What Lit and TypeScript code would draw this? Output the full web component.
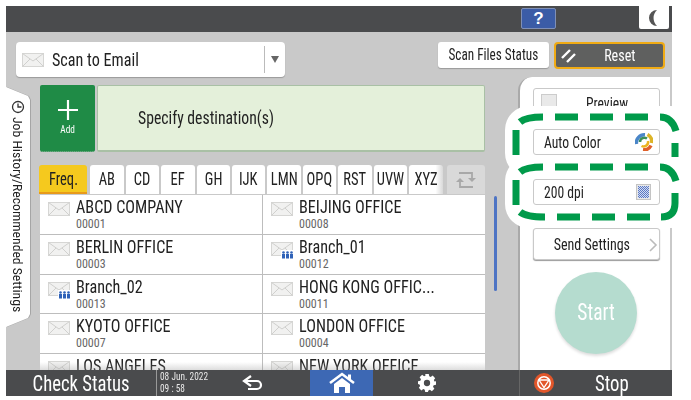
import { LitElement, html, css, svg } from "lit";
import { customElement } from "lit/decorators.js";

const envelope = (group = false) => html`<svg class="env" viewBox="0 0 24 20" width="24" height="20">
  <rect x="1.500" y="3.500" width="21" height="13" fill="#f1f1f0" stroke="#d6d6d4" stroke-width="1"/>
  <path d="M1.500 3.500 12 11 22.500 3.500M1.500 16.500 9 9M22.500 16.500 15 9" fill="none" stroke="#d0d0ce" stroke-width="1"/>
  ${group ? svg`<rect x="11" y="11" width="13" height="9" fill="#fff"/><g fill="#2f62b8"><circle cx="13.500" cy="13.500" r="1.300"/><circle cx="17.500" cy="13.500" r="1.300"/><circle cx="21.500" cy="13.500" r="1.300"/><rect x="12" y="15" width="3" height="4.500"/><rect x="16" y="15" width="3" height="4.500"/><rect x="20" y="15" width="3" height="4.500"/></g>` : ""}
</svg>`;

const rows: [string, string, boolean, string, string, boolean][] = [
  ["ABCD COMPANY", "00001", false, "BEIJING OFFICE", "00008", false],
  ["BERLIN OFFICE", "00003", false, "Branch_01", "00012", true],
  ["Branch_02", "00013", true, "HONG KONG OFFIC...", "00011", false],
  ["KYOTO OFFICE", "00007", false, "LONDON OFFICE", "00004", false],
  ["LOS ANGELES", "", false, "NEW YORK OFFICE", "", false],
];
const tabs = ["AB", "CD", "EF", "GH", "IJK", "LMN", "OPQ", "RST", "UVW", "XYZ"];

@customElement("app-root")
export class AppRoot extends LitElement {
  static styles = css`
    :host { display: block; width: 691px; height: 400px; background: #fff; overflow: hidden; position: relative;
      font-family: "Liberation Sans Narrow", "Roboto Condensed", "Liberation Sans", sans-serif; color: #222; }
    .s { display: inline-block; white-space: nowrap; transform: scaleX(var(--k, .85)); transform-origin: left center; }
    .c { transform-origin: center; }
    .screen { margin: 6px 0 0 6px; width: 666px; height: 390px; display: flex; flex-direction: column; background: #c9c9c9; }
    .top { height: 26px; flex: none; background: #4a4b4d; display: flex; align-items: flex-start; justify-content: flex-end; }
    .help { width: 35px; height: 21px; margin: 2px 83px 0 0; background: #3b5ca6; border: 1px solid #7f8fb5; border-radius: 2px; box-sizing: border-box;
      color: #fff; font: bold 17px/19px "Liberation Sans", sans-serif; text-align: center; }
    .moon { width: 30px; height: 23px; margin-right: 3px; background: #fff; border-radius: 0 0 2px 2px; display: flex; align-items: center; justify-content: center; }
    .head { height: 45px; flex: none; display: flex; align-items: flex-start; padding: 10px 7px 0 10px; box-sizing: border-box; }
    .drop { width: 269px; height: 35px; background: #fff; border-radius: 4px; box-shadow: 0 1px 1px #999; display: flex; align-items: center; padding-left: 5px; box-sizing: border-box; font-size: 19px; }
    .drop .env { margin-right: 7px; }
    .drop .lab { flex: 1; }
    .drop .arrow { width: 21px; height: 27px; border-left: 1px solid #bbb; display: flex; align-items: center; justify-content: center; box-sizing: border-box; }
    .arrow i { width: 0; height: 0; border: 4.5px solid transparent; border-top: 7px solid #666; border-bottom: 0; }
    .spacer { flex: 1; }
    .sfs { width: 111px; height: 26px; background: #fff; border-radius: 3px; box-shadow: 0 1px 1px #999; font-size: 16px; line-height: 26px; text-align: center; margin-right: 5px; --k: .825; }
    .reset { width: 111px; height: 27px; box-sizing: border-box; background: #5f605f; border: 2px solid #f0ab14; border-radius: 4px; color: #fff; font-size: 16px; display: flex; align-items: center; padding-left: 5px; --k: .88; }
    .reset .w { flex: 1; text-align: center; }
    .content { flex: 1; display: flex; min-height: 0; }
    .histwrap { width: 34px; flex: none; filter: drop-shadow(1px 0 0 #a5a5a5); padding-top: 10px; }
    .hist { width: 24px; height: 240px; background: #fff; box-sizing: border-box;
      clip-path: polygon(0 0, 22px 9px, 24px 13px, 24px 227px, 22px 231px, 0 240px);
      display: flex; flex-direction: column; align-items: center; padding-top: 13px; }
    .hist .txt { writing-mode: vertical-rl; font-size: 13.700px; line-height: 18px; white-space: nowrap; margin-top: 3px; }
    .mid { width: 445px; flex: none; display: flex; flex-direction: column; }
    .dest { display: flex; gap: 2px; margin-top: 8px; height: 67px; flex: none; }
    .add { width: 55px; background: #1f8b46; border-radius: 2px; color: #fff; display: flex; flex-direction: column; align-items: center; padding-top: 14px; box-sizing: border-box; font-size: 11px; line-height: 13px; border-bottom: 1px dotted #8fb79c; }
    .add svg { margin-bottom: 2px; }
    .spec { flex: 1; background: #e4f0da; border: 1px solid #a9c0a5; border-bottom-width: 2px; border-radius: 2px; box-sizing: border-box; font-size: 18.500px; display: flex; align-items: center; padding-left: 40px; }
    .tabs { margin-top: 13px; height: 30px; flex: none; display: flex; gap: 2px; position: relative; }
    .tab { height: 29px; width: 34px; background: #fff; border-radius: 3px 3px 0 0; font-size: 17.500px; line-height: 29px; text-align: center; box-sizing: border-box; --k: .83; }
    .tab.freq { width: 49px; background: #f5c91e; border-bottom: 2px solid #e89a1a; margin-right: 1px; margin-left: -1px; }
    .tab.last { background: linear-gradient(90deg, #fff 78%, #d9d9d9); }
    .tab.swap { width: 39px; background: #d9d9d9; margin-left: 2px; display: flex; align-items: center; justify-content: center; }
    .list { flex: 1; min-height: 0; overflow: hidden; background: #fff; position: relative; }
    .list::after { content: ""; position: absolute; left: 0; right: 0; bottom: 0; height: 8px; background: linear-gradient(#fff0, #9995); }
    .row { display: grid; grid-template-columns: 222px 1fr; height: 39.750px; border-bottom: 1px solid #bdbdbd; box-sizing: border-box; }
    .cell { display: flex; padding: 1px 0 0 7px; box-sizing: border-box; }
    .cell + .cell { border-left: 1px solid #bdbdbd; }
    .cell .env { margin: 3px 5px 0 0; flex: none; }
    .name { font-size: 19px; line-height: 22px; white-space: nowrap; }
    .num { font-size: 12px; line-height: 14px; margin-top: -1px; color: #666; }
    .scroll { width: 33px; flex: none; padding: 119px 0 0 9px; box-sizing: border-box; }
    .scroll i { display: block; width: 3px; height: 95px; background: #4e74c4; border-radius: 2px; }
    .panel { width: 152px; flex: none; background: #fff; border-left: 2px solid #a9a9a9; border-top-left-radius: 14px; box-sizing: border-box; display: flex; flex-direction: column; align-items: flex-start; padding: 11px 0 0 13px; }
    .opt { width: 127px; height: 26px; flex: none; background: #fff; border: 1px solid #c9c9c9; border-radius: 3px; box-sizing: border-box; font-size: 16px; display: flex; align-items: center; padding: 0 5px 0 10px; justify-content: space-between; position: relative; z-index: 1; }
    .prev { height: 30px; margin-bottom: 11px; padding-left: 7px; z-index: 0; position: static; align-items: flex-start; padding-top: 5px; }
    .prev i { width: 14px; height: 14px; background: #e9e9e9; border: 1px solid #ccc; }
    .prev span { width: 44px; margin-right: 24px; }
    .o2 { margin-bottom: 24px; padding-right: 6px; }
    .o2 .s, .o3 .s { width: 60px; }
    .o3 { margin-bottom: 23px; padding-right: 8px; }
    .send { height: 32px; box-shadow: 0 1px 1px #999; justify-content: center; font-size: 16.500px; padding: 0 10px 0 0; }
    .send svg { position: absolute; right: 1px; top: 8px; }
    .start { width: 82px; height: 82px; border-radius: 50%; background: #b5dccf; color: #fff; font-size: 23px; line-height: 82px; text-align: center; margin: 12px 0 0 22px; box-shadow: 0 2px 3px #ddd; }
    .bottom { height: 26px; flex: none; background: #4a4b4d; color: #fff; display: flex; align-items: center; }
    .chk { width: 150px; font-size: 22px; text-align: center; flex: none; }
    .date { width: 60px; height: 26px; flex: none; border-left: 1px solid #999; box-sizing: border-box; font-size: 11px; line-height: 12px; padding: 1px 0 0 3px; color: #e8e8e8; }
    .back { width: 94px; flex: none; display: flex; justify-content: center; padding-right: 20px; box-sizing: border-box; }
    .home { width: 63px; height: 26px; flex: none; background: #3d68b4; display: flex; align-items: center; justify-content: center; }
    .gear { width: 147px; flex: none; display: flex; justify-content: center; border-right: 1px solid #666; box-sizing: border-box; height: 26px; align-items: center; padding-right: 38px; }
    .stopi { margin-left: 14px; flex: none; }
    .stop { font-size: 22px; flex: 1; text-align: center; padding-right: 2px; }
    .ov { position: absolute; left: 0; top: 0; pointer-events: none; }
  `;

  render() {
    return html`<div class="screen">
      <div class="top">
        <div class="help">?</div>
        <div class="moon"><svg width="16" height="18" viewBox="0 0 16 18"><path d="M11 1A8 8 0 1 0 11 17 11 11 0 0 1 11 1Z" fill="#555"/></svg></div>
      </div>
      <div class="head">
        <div class="drop">${envelope()}<span class="lab"><span class="s">Scan to Email</span></span><span class="arrow"><i></i></span></div>
        <div class="spacer"></div>
        <div class="sfs"><span class="s c">Scan Files Status</span></div>
        <div class="reset"><svg width="16" height="14" viewBox="0 0 16 14"><path d="M1 9 9 1M6 13 14 5" stroke="#fff" stroke-width="2.400" fill="none"/></svg><span class="w"><span class="s c">Reset</span></span></div>
      </div>
      <div class="content">
        <div class="histwrap"><div class="hist">
          <svg width="14" height="14" viewBox="0 0 14 14"><circle cx="7" cy="7" r="5.500" fill="none" stroke="#333" stroke-width="1.300"/><path d="M3.500 7H7V3.500" transform="rotate(90 7 7)" fill="none" stroke="#333" stroke-width="1.300"/></svg>
          <span class="txt">Job History/Recommended Settings</span>
        </div></div>
        <div class="mid">
          <div class="dest">
            <div class="add"><svg width="22" height="22" viewBox="0 0 22 22"><path d="M11 1V21M1 11H21" stroke="#fff" stroke-width="2.200"/></svg><span class="s c">Add</span></div>
            <div class="spec"><span class="s">Specify destination(s)</span></div>
          </div>
          <div class="tabs">
            <div class="tab freq"><span class="s c">Freq.</span></div>
            ${tabs.map((t) => html`<div class="tab ${t === "XYZ" ? "last" : ""}"><span class="s c">${t}</span></div>`)}
            <div class="tab swap"><svg width="22" height="18" viewBox="0 0 22 18"><path d="M4 2H17V7M18 16H5V11" fill="none" stroke="#a8a8a8" stroke-width="1.800"/><path d="M13 7H21L17 11ZM1 11H9L5 7Z" fill="#a8a8a8"/></svg></div>
          </div>
          <div class="list">
            ${rows.map((r) => html`<div class="row">
              <div class="cell">${envelope(r[2])}<div><div class="name"><span class="s">${r[0]}</span></div><div class="num">${r[1]}</div></div></div>
              <div class="cell">${envelope(r[5])}<div><div class="name"><span class="s">${r[3]}</span></div><div class="num">${r[4]}</div></div></div>
            </div>`)}
          </div>
        </div>
        <div class="scroll"><i></i></div>
        <div class="panel">
          <div class="opt prev"><i></i><span class="s">Preview</span></div>
          <div class="opt o2"><span class="s">Auto Color</span>
            <svg width="18" height="18" viewBox="0 0 18 18" fill="none" stroke-width="3.500"><path d="M1.500 11A8 8 0 0 1 10 1.800" stroke="#4a86c8"/><path d="M12.500 1.500A8 8 0 0 1 16.500 10" stroke="#dcb428"/><path d="M16 12.500A8 8 0 0 1 8 16.800" stroke="#e0602a"/><path d="M5 9A4.500 4.500 0 0 1 12 5.500" stroke="#3e9058" stroke-width="2.500"/><path d="M13 8A4.500 4.500 0 0 1 6.500 13" stroke="#ecb420" stroke-width="2.500"/></svg>
          </div>
          <div class="opt o3"><span class="s">200 dpi</span>
            <svg width="15" height="16" viewBox="0 0 15 16"><defs><pattern id="h" width="2" height="2" patternUnits="userSpaceOnUse"><rect width="2" height="2" fill="#d3dcf1"/><rect width="1" height="1" fill="#5a78c4"/><rect x="1" y="1" width="1" height="1" fill="#5a78c4"/></pattern></defs><rect x=".5" y=".5" width="14" height="15" fill="#e8e8e8" stroke="#c4c4c4"/><rect x="2" y="2" width="11" height="12" fill="url(#h)"/></svg>
          </div>
          <div class="opt send"><span class="s c">Send Settings</span><svg width="10" height="16" viewBox="0 0 10 16"><path d="M2 2 8 8 2 14" fill="none" stroke="#bbb" stroke-width="1.600"/></svg></div>
          <div class="start"><span class="s c">Start</span></div>
        </div>
      </div>
      <div class="bottom">
        <div class="chk"><span class="s c">Check Status</span></div>
        <div class="date"><span class="s">08 Jun. 2022</span><br /><span class="s">09 : 58</span></div>
        <div class="back"><svg width="22" height="16" viewBox="0 0 22 16"><path d="M9 1 2 6l7 5M2 6H15A4 4 0 0 1 15 14H6" fill="none" stroke="#fff" stroke-width="2.200"/></svg></div>
        <div class="home"><svg width="26" height="22" viewBox="0 0 26 22"><path d="M1 11 13 2l12 9" fill="none" stroke="#fff" stroke-width="2.600"/><path d="M5 12 13 6l8 6v9h-5v-6h-6v6H5z" fill="#fff"/><rect x="19" y="2.500" width="3" height="5" fill="#fff"/></svg></div>
        <div class="gear"><svg width="18" height="18" viewBox="0 0 20 20"><path fill="#fff" fill-rule="evenodd" d="M8 0h4l.5 2.600 1.600.7 2.200-1.500 2.800 2.800-1.500 2.200.7 1.600L20 8v4l-2.600.5-.7 1.600 1.500 2.200-2.800 2.800-2.200-1.500-1.600.7L11 20H8l-.5-2.600-1.600-.7-2.200 1.500L.9 15.400l1.500-2.200-.7-1.600L0 11V8l2.600-.5.7-1.600L1.800 3.700 4.600.9l2.200 1.500 1.600-.7zM10 6.500a3.500 3.500 0 1 0 0 7 3.500 3.500 0 0 0 0-7z"/></svg></div>
        <svg class="stopi" width="20" height="20" viewBox="0 0 20 20"><circle cx="10" cy="10" r="10" fill="#e2562a"/><circle cx="10" cy="10" r="6.200" fill="none" stroke="#fff" stroke-width="1.500"/><path d="M5 7H15L10 14.500Z" fill="none" stroke="#fff" stroke-width="1.300"/></svg>
        <div class="stop"><span class="s c">Stop</span></div>
      </div>
    </div>
    <svg class="ov" width="691" height="400" viewBox="0 0 691 400">
      <rect x="505" y="106" width="190" height="71" rx="24" fill="#fff"/>
      <rect x="505" y="157" width="190" height="71" rx="24" fill="#fff"/>
      <g fill="none" stroke="#009a4a" stroke-width="7">
        <path d="M520 122Q526 117 543 117M555 117H578M590 117H613M625 117H648M660 117Q672 117 676 131M516 130V155M675 143V157"/>
        <path d="M520 172Q526 167 543 167M555 167H578M590 167H613M625 167H648M660 167Q672 167 676 181M516 180V205M675 193V203Q675 217 661 217M520 212Q526 217 545 217M557 217H580M592 217H615M627 217H650"/>
      </g>
    </svg>`;
  }
}
